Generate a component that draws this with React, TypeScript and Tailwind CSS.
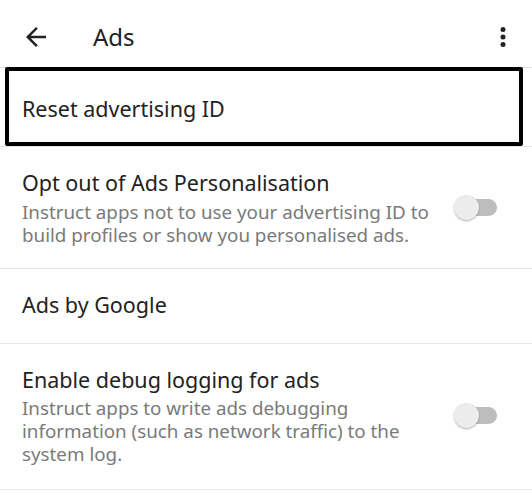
import React from "react";

function Toggle() {
  return (
    <div className="relative w-[41px] h-[17px] rounded-full bg-[#bdbdbd] shrink-0">
      <div className="absolute left-[-2px] top-[-4px] w-[25px] h-[25px] rounded-full bg-[#ececec] shadow-[0_1px_2px_rgba(0,0,0,0.3)]" />
    </div>
  );
}

export default function App() {
  return (
    <div className="w-[532px] h-[500px] bg-white overflow-hidden font-['Noto_Sans',sans-serif] text-[#222222]">
      {/* Header */}
      <div className="h-[68px] flex items-center pt-[6px] pl-[21px] pr-[14px] border-b border-[#e6e6e6]">
        <svg width="30" height="30" viewBox="0 0 24 24" fill="#222">
          <path d="M20 11H7.83l5.59-5.59L12 4l-8 8 8 8 1.41-1.41L7.83 13H20v-2z" />
        </svg>
        <span className="ml-[42px] text-[24px] leading-[30px]">Ads</span>
        <svg className="ml-auto" width="30" height="30" viewBox="0 0 24 24" fill="#222">
          <circle cx="12" cy="6" r="2" />
          <circle cx="12" cy="12" r="2" />
          <circle cx="12" cy="18" r="2" />
        </svg>
      </div>

      {/* Reset advertising ID */}
      <div className="relative h-[79px] pl-[22px] pt-[26px] border-b border-[#e6e6e6]">
        <div className="text-[21.5px] leading-[30px]">Reset advertising ID</div>
        <div className="absolute left-[5px] right-[9px] top-[-1px] h-[79px] border-[4px] border-black rounded-[2px]" />
      </div>

      {/* Opt out */}
      <div className="flex items-center pl-[22px] pr-[35px] pt-[21px] pb-[21px] border-b border-[#e6e6e6]">
        <div className="flex-1">
          <div className="text-[21.5px] leading-[30px] whitespace-nowrap">Opt out of Ads Personalisation</div>
          <div className="mt-[3px] text-[18.8px] leading-[23px] text-[#7a7a7a] whitespace-nowrap">
            Instruct apps not to use your advertising ID to
            <br />
            build profiles or show you personalised ads.
          </div>
        </div>
        <Toggle />
      </div>

      {/* Ads by Google */}
      <div className="pl-[22px] pt-[21px] pb-[23px] border-b border-[#e6e6e6]">
        <div className="text-[21.5px] leading-[30px]">Ads by Google</div>
      </div>

      {/* Debug logging */}
      <div className="flex items-center pl-[22px] pr-[35px] pt-[21px] pb-[23px] border-b border-[#e6e6e6]">
        <div className="flex-1">
          <div className="text-[21.5px] leading-[30px] whitespace-nowrap">Enable debug logging for ads</div>
          <div className="mt-[2px] text-[18.8px] leading-[23px] text-[#7a7a7a] whitespace-nowrap">
            Instruct apps to write ads debugging
            <br />
            information (such as network traffic) to the
            <br />
            system log.
          </div>
        </div>
        <Toggle />
      </div>
    </div>
  );
}
